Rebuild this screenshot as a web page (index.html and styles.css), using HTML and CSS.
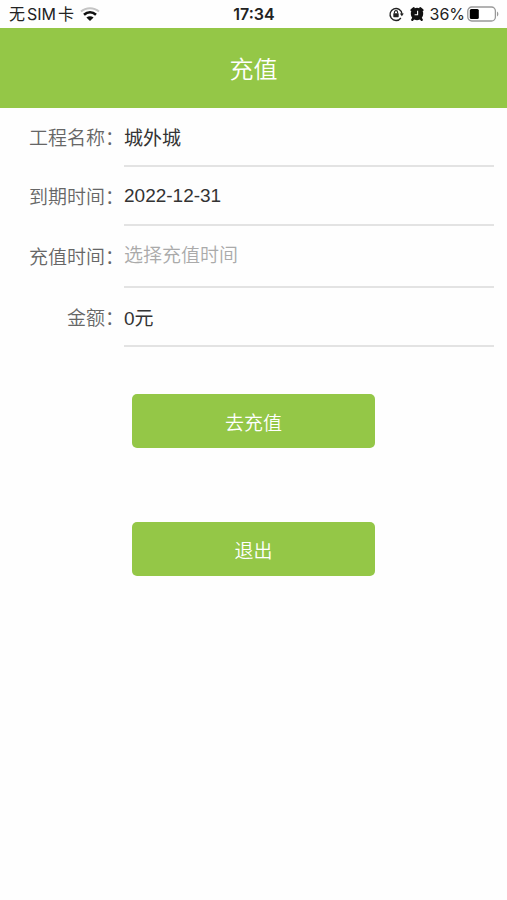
FILE: index.html
```html
<!DOCTYPE html>
<html lang="zh-CN">
<head>
<meta charset="utf-8">
<meta name="viewport" content="width=device-width, initial-scale=1">
<title>充值</title>
<link rel="stylesheet" href="styles.css">
</head>
<body>
<div class="status">
  <div class="status-side">
    <span class="carrier"><span>无</span><span>SIM</span><span>卡</span></span>
    <svg class="wifi" viewBox="0 0 20 14" width="20" height="14" aria-hidden="true">
      <path d="M1 4.600C6 .1 14 .1 19 4.600" fill="none" stroke="#c4c4c4" stroke-width="2"/>
      <path d="M4 7.800c3.600-3.200 8.400-3.200 12 0" fill="none" stroke="#111" stroke-width="2.600"/>
      <path d="M6.400 10.600c2.200-1.900 5-1.900 7.200 0L10 13.900z" fill="#111"/>
    </svg>
  </div>
  <time class="clock">17:34</time>
  <div class="status-side status-end">
    <svg viewBox="0 0 16 16" width="16" height="16" aria-hidden="true">
      <path d="M12.900 12A6 6 0 1 1 14 8" fill="none" stroke="#222" stroke-width="1.300"/>
      <path d="M11.800 7.500h4L13.900 10.300z" fill="#222"/>
      <rect x="5.300" y="7.200" width="5.400" height="4" rx=".6" fill="#222"/>
      <path d="M6.400 7.500V6.200a1.600 1.600 0 0 1 3.200 0v1.300" fill="none" stroke="#222" stroke-width="1.100"/>
    </svg>
    <svg class="alarm" viewBox="0 0 16 16" width="16" height="16" aria-hidden="true">
      <circle cx="8" cy="8" r="6.200" fill="#111"/>
      <path d="M2.600 4.200 4.700 2.300M13.400 4.200l-2.100-1.900M4.300 12.400l-1 1.300M11.700 12.400l1 1.300" stroke="#111" stroke-width="2.400" stroke-linecap="round"/>
      <path d="M8.600 4.700v4H5.600" fill="none" stroke="#fff" stroke-width="1.100"/>
    </svg>
    <span class="level">
      <span class="percent">36%</span>
      <svg viewBox="0 0 32 16" width="32" height="16" aria-hidden="true">
        <rect x=".8" y="1" width="27.600" height="14" rx="4" fill="#fff" stroke="#999" stroke-width="1.300"/>
        <rect x="2.800" y="3" width="9" height="10" rx="1.500" fill="#000"/>
        <path d="M30 5.500c1.800.8 1.800 4.200 0 5z" fill="#999"/>
      </svg>
    </span>
  </div>
</div>
<header class="title-bar"><h1>充值</h1></header>
<main>
  <form>
    <div class="row">
      <label for="project">工程名称：</label>
      <input id="project" type="text" value="城外城" readonly>
    </div>
    <div class="row">
      <label for="expiry">到期时间：</label>
      <input id="expiry" type="text" value="2022-12-31" readonly>
    </div>
    <div class="row row-picker">
      <label for="recharge">充值时间：</label>
      <input id="recharge" type="text" placeholder="选择充值时间">
    </div>
    <div class="row">
      <label for="amount">金额：</label>
      <input id="amount" type="text" value="0元" readonly>
    </div>
    <div class="actions">
      <button type="button">去充值</button>
      <button type="button">退出</button>
    </div>
  </form>
</main>
</body>
</html>
```

FILE: styles.css
```css
* {
  box-sizing: border-box;
}

body {
  margin: 0;
  background: #fefefe;
  color: #333;
  font-family: "Liberation Sans", "Noto Sans CJK SC", sans-serif;
  font-size: 19px;
}

.status {
  display: flex;
  align-items: center;
  height: 28px;
  padding: 0 8px 0 9px;
  color: #222;
  font-family: Inter, "Noto Sans CJK SC", sans-serif;
  font-size: 16px;
  line-height: 28px;
}

.status-side {
  display: flex;
  flex: 1;
  align-items: center;
  gap: 6px;
}

.status-end {
  justify-content: flex-end;
  gap: 5px;
}

.carrier,
.level {
  display: flex;
  align-items: center;
  gap: 2px;
}

.clock {
  font-weight: 600;
}

.title-bar {
  display: flex;
  align-items: center;
  justify-content: center;
  height: 80px;
  padding-top: 4px;
  background: #94c747;
  color: #fff;
}

.title-bar h1 {
  margin: 0;
  font-size: 24px;
  font-weight: 350;
  line-height: 36px;
}

.row {
  display: flex;
  height: 59px;
  padding-right: 13px;
}

.row-picker {
  height: 62px;
}

.row label {
  flex: 0 0 124px;
  align-self: center;
  padding-top: 2px;
  color: #666;
  font-weight: 350;
  line-height: 28px;
  text-align: right;
}

.row input {
  flex: 1;
  min-width: 0;
  padding: 0;
  border: 0;
  border-bottom: 2px solid #e3e3e3;
  border-radius: 0;
  outline: 0;
  background: transparent;
  color: #333;
  font: inherit;
}

.row input::placeholder {
  color: #aaa;
  font-weight: 350;
  opacity: 1;
}

.actions {
  display: flex;
  flex-direction: column;
  align-items: center;
  gap: 74px;
  padding-top: 47px;
}

.actions button {
  width: 48%;
  height: 54px;
  padding: 0;
  border: 0;
  border-radius: 5px;
  background: #94c747;
  color: #fff;
  font: inherit;
  font-weight: 350;
}
```
